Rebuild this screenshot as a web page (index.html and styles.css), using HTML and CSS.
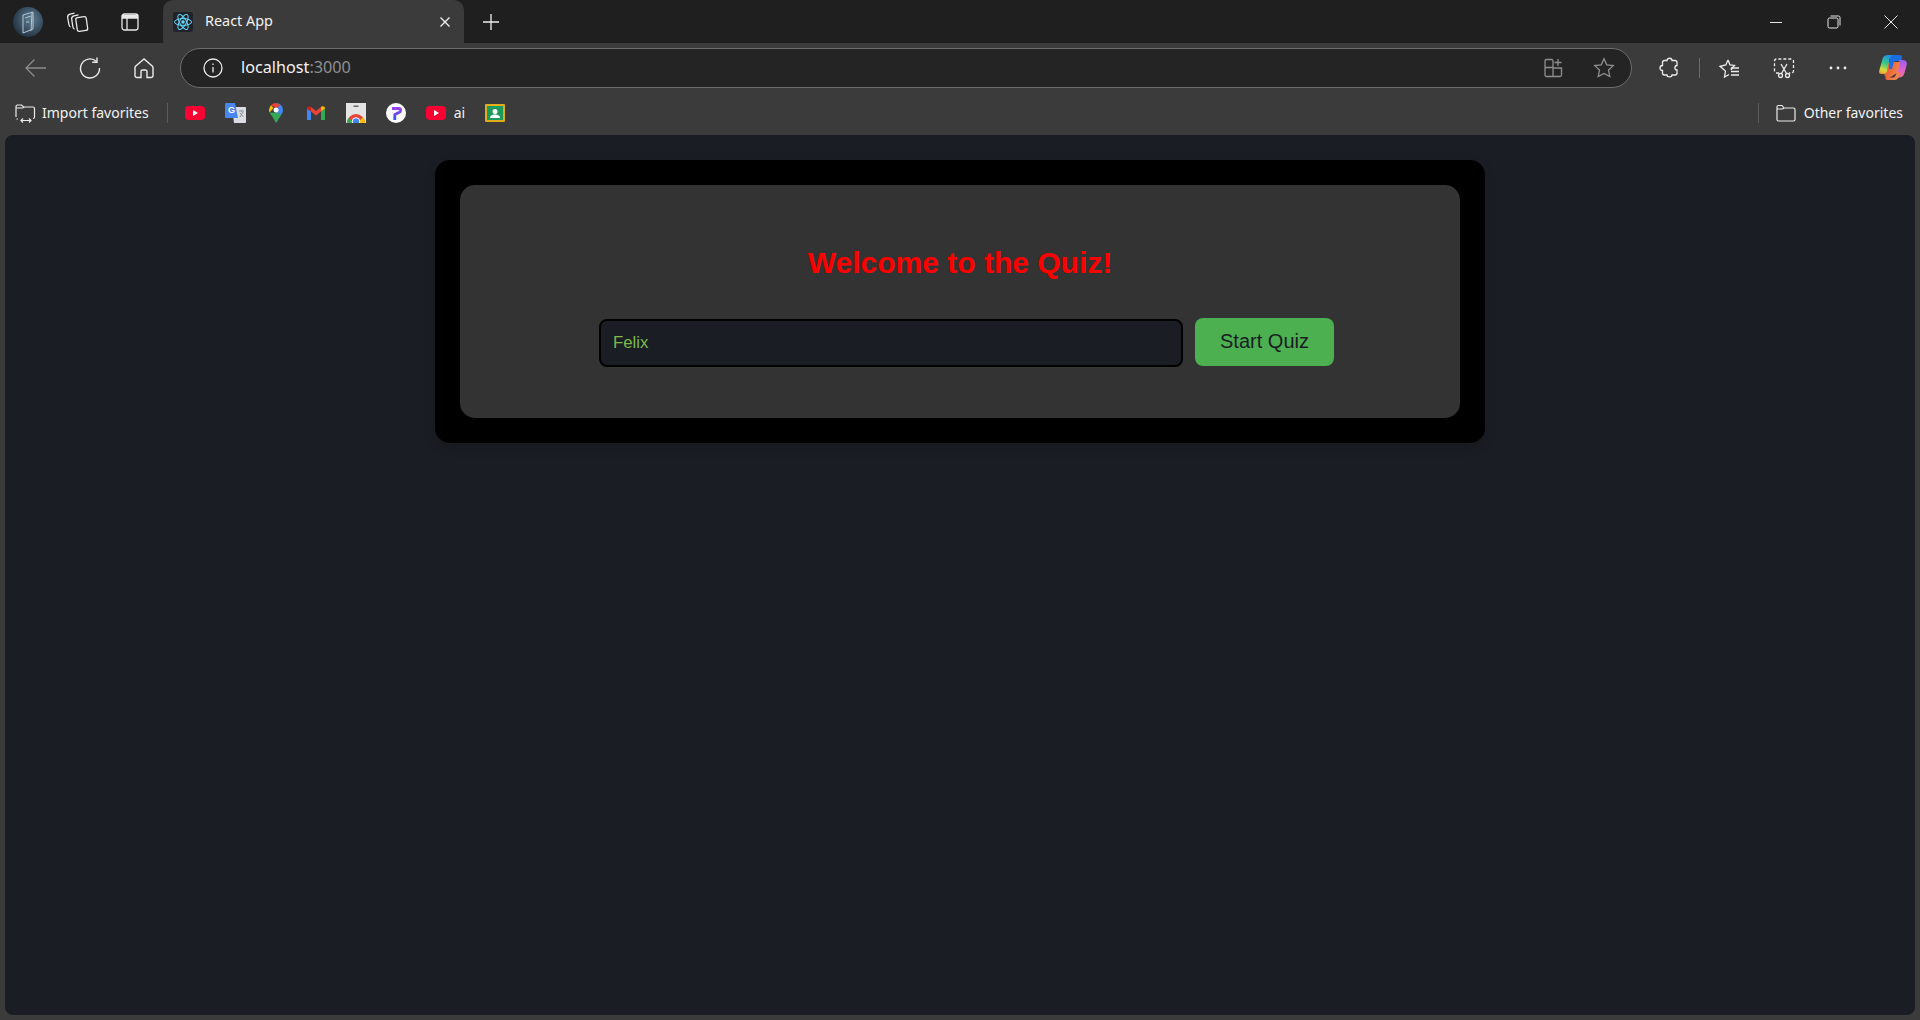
FILE: index.html
```html
<!DOCTYPE html>
<html lang="en">
<head>
    <meta charset="UTF-8">
    <meta name="viewport" content="width=device-width, initial-scale=1.0">
    <title>React App</title>
    <link rel="stylesheet" href="styles.css">
</head>
<body>
    <div class="titlebar">
        <div class="avatar">
            <svg width="30" height="30" viewBox="0 0 30 30">
                <defs>
                    <radialGradient id="avatarBg" cx="0.6" cy="0.4" r="0.7">
                        <stop offset="0" stop-color="#5f7f95"/>
                        <stop offset="1" stop-color="#1d2b3a"/>
                    </radialGradient>
                </defs>
                <circle cx="15" cy="15" r="15" fill="url(#avatarBg)"/>
                <path d="M10 8l10-3v17l-10 4zM12 11l6-2M13 15h3M19 6l-1 18" fill="none" stroke="#b9c6d0" stroke-width="1"/>
            </svg>
        </div>
        <button class="tb-btn">
            <svg width="24" height="24" viewBox="0 0 24 24" fill="none" stroke="#e8e8e8" stroke-width="1.300">
                <path d="M9.500 3.200L5 4.200C3.200 4.600 2.400 5.700 2.700 7.500L3.900 14.500C4.100 15.700 4.600 16.500 5.500 17"/>
                <path d="M13.500 4.800L9 5.800C7.200 6.200 6.400 7.300 6.700 9.100L7.800 16.500C8 17.800 8.500 18.700 9.500 19.200"/>
                <rect x="11.500" y="7" width="10.500" height="14" rx="2" transform="rotate(-8 16.750 14)"/>
            </svg>
        </button>
        <button class="tb-btn tb-btn-side">
            <svg width="20" height="20" viewBox="0 0 20 20" fill="none" stroke="#e8e8e8" stroke-width="1.300">
                <rect x="2" y="2" width="16" height="16" rx="2.500"/>
                <path d="M2.500 3.500h15v2.500h-15z" fill="#e8e8e8"/>
                <path d="M7 6v12"/>
            </svg>
        </button>
        <div class="tab">
            <svg class="tab-icon" width="20" height="20" viewBox="0 0 20 20">
                <rect width="20" height="20" rx="2" fill="#20232a"/>
                <circle cx="10" cy="10" r="1.800" fill="#61dafb"/>
                <g fill="none" stroke="#61dafb" stroke-width="1">
                    <ellipse cx="10" cy="10" rx="8.500" ry="3.400"/>
                    <ellipse cx="10" cy="10" rx="8.500" ry="3.400" transform="rotate(60 10 10)"/>
                    <ellipse cx="10" cy="10" rx="8.500" ry="3.400" transform="rotate(120 10 10)"/>
                </g>
            </svg>
            <span class="tab-title">React App</span>
            <svg class="tab-close" width="12" height="12" viewBox="0 0 12 12" stroke="#f0f0f0" stroke-width="1.300">
                <path d="M1.500 1.500l9 9M10.500 1.500l-9 9"/>
            </svg>
        </div>
        <button class="tb-btn new-tab">
            <svg width="18" height="18" viewBox="0 0 18 18" stroke="#f0f0f0" stroke-width="1.300">
                <path d="M9 1v16M1 9h16"/>
            </svg>
        </button>
        <div class="window-controls">
            <button class="win-btn">
                <svg width="14" height="14" viewBox="0 0 14 14" stroke="#e8e8e8"><path d="M1 7.500h12"/></svg>
            </button>
            <button class="win-btn">
                <svg width="14" height="14" viewBox="0 0 14 14" fill="none" stroke="#e8e8e8">
                    <rect x="1" y="3" width="10" height="10" rx="1.500"/>
                    <path d="M3.500 1h8a1.500 1.500 0 0 1 1.500 1.500v8"/>
                </svg>
            </button>
            <button class="win-btn">
                <svg width="14" height="14" viewBox="0 0 14 14" stroke="#e8e8e8"><path d="M.5.500l13 13M13.500.500l-13 13"/></svg>
            </button>
        </div>
    </div>

    <div class="toolbar">
        <button class="nav-btn">
            <svg width="22" height="22" viewBox="0 0 22 22" fill="none" stroke="#8c8c8c" stroke-width="1.300">
                <path d="M1 11h20M9.500 2.500L1 11l8.500 8.500"/>
            </svg>
        </button>
        <button class="nav-btn">
            <svg width="22" height="22" viewBox="0 0 22 22" fill="none" stroke="#ececec" stroke-width="1.400">
                <path d="M17.500 4.500A9.500 9.500 0 1 0 20.500 11"/>
                <path d="M18 .500v4.800h-4.800"/>
            </svg>
        </button>
        <button class="nav-btn">
            <svg width="22" height="22" viewBox="0 0 22 22" fill="none" stroke="#ececec" stroke-width="1.400">
                <path d="M11 2L2.800 9c-.5.500-.8 1-.8 1.800v8c0 1 .7 1.700 1.700 1.700h4.300v-6a1.500 1.500 0 0 1 1.500-1.500h3a1.500 1.500 0 0 1 1.500 1.500v6h4.300c1 0 1.700-.7 1.700-1.700v-8c0-.8-.3-1.300-.8-1.800z"/>
            </svg>
        </button>
        <div class="address-bar">
            <svg class="info-icon" width="20" height="20" viewBox="0 0 20 20" fill="none" stroke="#ececec" stroke-width="1.300">
                <circle cx="10" cy="10" r="9"/>
                <path d="M10 9v5.500M10 5.500v1.500"/>
            </svg>
            <span class="url">localhost<span class="url-port">:3000</span></span>
            <svg class="addr-action" width="20" height="20" viewBox="0 0 20 20" fill="none" stroke="#8f8f8f" stroke-width="1.300">
                <path d="M10 9.500V3a1.500 1.500 0 0 0-1.500-1.500h-5A1.500 1.500 0 0 0 2 3v6.500zM10 9.500V18.500h-6.500A1.500 1.500 0 0 1 2 17V9.500zM10 10h8.500v7a1.500 1.500 0 0 1-1.500 1.500h-7zM15 1v7M11.500 4.500h7"/>
            </svg>
            <svg class="addr-action" width="22" height="22" viewBox="0 0 22 22" fill="none" stroke="#8f8f8f" stroke-width="1.300">
                <path d="M11 1.800l2.800 6 6.500.8-4.800 4.500 1.300 6.500-5.800-3.200-5.800 3.200 1.300-6.500L1.700 8.600l6.500-.8z"/>
            </svg>
        </div>
        <div class="tools">
            <button class="tool-btn">
                <svg width="20" height="22" viewBox="0 0 20 22" fill="none" stroke="#ececec" stroke-width="1.300">
                    <path d="M8 3.500c0-3 5-3 5 0h3c1.200 0 2 .8 2 2v3c-2.800 0-2.800 4.500 0 4.500v3c0 1.200-.8 2-2 2h-3c0 2.500-5 2.500-5 0H5.500c-1.200 0-2-.8-2-2v-2.500c-3.300 0-3.300-5 0-5V5.500c0-1.200.8-2 2-2z"/>
                </svg>
            </button>
            <span class="tool-sep"></span>
            <button class="tool-btn">
                <svg width="22" height="22" viewBox="0 0 22 22" fill="none" stroke="#ececec" stroke-width="1.300">
                    <path d="M10 3l2 4.800 4.500.6-3.400 3.600 1 .8M7.500 14l-1 6 4.500-2.500M7.500 14L2 9.300l5.800-1.400L10 3"/>
                    <path d="M13 11h8M13 14.500h8M13 18h8"/>
                </svg>
            </button>
            <button class="tool-btn">
                <svg width="22" height="22" viewBox="0 0 22 22" fill="none" stroke="#ececec" stroke-width="1.300">
                    <path d="M6 16H3.500A2 2 0 0 1 1.500 14V4A2 2 0 0 1 3.500 2h15a2 2 0 0 1 2 2v10a2 2 0 0 1-2 2H16" stroke-dasharray="3 2"/>
                    <circle cx="7.500" cy="18.500" r="2"/>
                    <circle cx="14.500" cy="18.500" r="2"/>
                    <path d="M8.500 16.500L14 7M13.500 16.500L8 7"/>
                </svg>
            </button>
            <button class="tool-btn">
                <svg width="20" height="6" viewBox="0 0 20 6" fill="#ececec">
                    <circle cx="3" cy="3" r="1.400"/>
                    <circle cx="10" cy="3" r="1.400"/>
                    <circle cx="17" cy="3" r="1.400"/>
                </svg>
            </button>
            <button class="tool-btn">
                <svg width="28" height="27" viewBox="0 0 28 27">
                    <defs>
                        <linearGradient id="copA" x1="0.6" y1="0" x2="0.3" y2="1">
                            <stop offset="0" stop-color="#1f8fe8"/>
                            <stop offset="0.45" stop-color="#37c98a"/>
                            <stop offset="0.8" stop-color="#d7dc3c"/>
                            <stop offset="1" stop-color="#f2a03c"/>
                        </linearGradient>
                        <linearGradient id="copB" x1="0.5" y1="0" x2="0.5" y2="1">
                            <stop offset="0" stop-color="#9a5cf0"/>
                            <stop offset="0.6" stop-color="#e064c8"/>
                            <stop offset="1" stop-color="#f0708c"/>
                        </linearGradient>
                        <linearGradient id="copC" x1="0" y1="0" x2="1" y2="0.4">
                            <stop offset="0" stop-color="#e8502c"/>
                            <stop offset="1" stop-color="#f28a50"/>
                        </linearGradient>
                    </defs>
                    <path d="M7 8h14l1.500 8-14 9-3-3.500z" fill="url(#copC)"/>
                    <path d="M11 1h9c2.500 0 3.500 1.500 3 3l-1 3h-5c-1.500 0-2 .8-2.500 2l-1.500 6H10z" fill="#1a6fe0"/>
                    <path d="M9 1h5c-2 .5-3 2-3.500 4L8 17c-.5 2-1.500 3-3.500 3H2.500C.5 20-.3 18.500.3 16.500L3.500 5C4.200 2.500 6 1 9 1z" fill="url(#copA)"/>
                    <path d="M19 6h5c2.500 0 4.300 1.500 3.800 4.500L25.500 19c-.7 3-3 4.500-5.500 4.500h-5c2-.5 3-2 3.500-4L20.500 10c.3-2-.3-3.500-1.500-4z" fill="url(#copB)"/>
                    <path d="M8.500 26h7c2 0 3.500-1.200 4-3l1.200-5h-3l-1.200 3.500c-.5 1.500-1.500 2-3 2H8c-1 0-1.500 0-2-.5.300 1.800 1 3 2.500 3z" fill="url(#copC)"/>
                </svg>
            </button>
        </div>
    </div>

    <div class="bookmarks">
        <div class="bm-item bm-import">
            <svg width="21" height="20" viewBox="0 0 21 20" fill="none" stroke="#ececec" stroke-width="1.200">
                <path d="M1 14V3.500A1.500 1.500 0 0 1 2.500 2h4l2 2h9.500A1.500 1.500 0 0 1 19.500 5.500V14c0 1-.6 1.500-1.500 1.500M3 16H1.500M1 5h6.500l2-1"/>
                <path d="M6 17.500h10M8 15.500l-2 2 2 2M14 15.500l2 2-2 2"/>
            </svg>
            <span>Import favorites</span>
        </div>
        <span class="bm-sep"></span>
        <div class="bm-icons">
            <div class="bm-item">
                <svg width="20" height="14" viewBox="0 0 20 14"><rect width="20" height="14" rx="4" fill="#ff0033"/><path d="M8 4l5 3-5 3z" fill="#fff"/></svg>
            </div>
            <div class="bm-item">
                <svg width="21" height="20" viewBox="0 0 21 20">
                    <path d="M7 4h13a1 1 0 0 1 1 1v14a1 1 0 0 1-1 1H9z" fill="#d9dde2"/>
                    <path d="M14 8h5M16.500 7v1.500M15 14l3-5M15 10l3.500 4" stroke="#8a949e" stroke-width="1" fill="none"/>
                    <path d="M1 0h9l3 15H1a1 1 0 0 1-1-1V1a1 1 0 0 1 1-1z" fill="#4a86f0"/>
                    <text x="3" y="10" class="bm-g">G</text>
                </svg>
            </div>
            <div class="bm-item">
                <svg width="14" height="20" viewBox="0 0 14 20">
                    <path d="M7 0a7 7 0 0 1 7 7c0 2-1 3.500-2 5l-5 8z" fill="#4285f4"/>
                    <path d="M2 2.300A7 7 0 0 1 7 0l4 2-3 3.500z" fill="#ea4335"/>
                    <path d="M2 2.300A7 7 0 0 0 0 7c0 1 .2 1.800.6 2.600l4-4.600z" fill="#fbbc04"/>
                    <path d="M.6 9.600c.7 1.500 2 3 3 4.500L7 20l5-8-3.500-2.700-3 .5z" fill="#34a853"/>
                    <circle cx="7" cy="7" r="2.500" fill="#fff"/>
                </svg>
            </div>
            <div class="bm-item">
                <svg width="18" height="14" viewBox="0 0 18 14">
                    <path d="M0 2.500V14h4V5.500z" fill="#4285f4"/>
                    <path d="M14 5.500V14h4V2.500z" fill="#34a853"/>
                    <path d="M4 5.500L9 9.500l5-4V1l-5 4L4 1z" fill="#ea4335"/>
                    <path d="M0 2.500C0 .5 2.500-.5 4 1v4.500z" fill="#c5221f"/>
                    <path d="M18 2.500C18 .5 15.500-.5 14 1v4.500z" fill="#fbbc04"/>
                </svg>
            </div>
            <div class="bm-item">
                <svg width="20" height="20" viewBox="0 0 20 20">
                    <rect width="20" height="20" fill="#e4e4e4"/>
                    <rect x="7.500" y="2.500" width="5" height="1.500" fill="#666"/>
                    <path d="M1 20a9 9 0 0 1 18 0z" fill="#ea4335"/>
                    <path d="M1 20a9 9 0 0 1 1.500-5l5.500 5z" fill="#34a853"/>
                    <path d="M19 20a9 9 0 0 0-2-5.700L11 20z" fill="#fbbc04"/>
                    <circle cx="10" cy="18.500" r="3.800" fill="#4285f4" stroke="#fff" stroke-width="1"/>
                </svg>
            </div>
            <div class="bm-item">
                <svg width="20" height="20" viewBox="0 0 20 20">
                    <defs>
                        <linearGradient id="pGrad" x1="0" y1="0" x2="0" y2="1">
                            <stop offset="0" stop-color="#9b3df0"/>
                            <stop offset="1" stop-color="#2f55f0"/>
                        </linearGradient>
                    </defs>
                    <circle cx="10" cy="10" r="10" fill="#fff"/>
                    <path d="M6 5.500H13C15 5.500 15.200 8.200 13.500 9.200L8.800 11.500V17" fill="none" stroke="url(#pGrad)" stroke-width="2.800" stroke-linejoin="round"/>
                </svg>
            </div>
            <div class="bm-item bm-named">
                <svg width="20" height="14" viewBox="0 0 20 14"><rect width="20" height="14" rx="4" fill="#ff0033"/><path d="M8 4l5 3-5 3z" fill="#fff"/></svg>
                <span>ai</span>
            </div>
            <div class="bm-item">
                <svg width="20" height="18" viewBox="0 0 20 18">
                    <rect width="20" height="18" rx="1" fill="#e0ac1c"/>
                    <rect x="2" y="2" width="16" height="14" fill="#1a9a5c"/>
                    <circle cx="10" cy="7.500" r="2.500" fill="#fff"/>
                    <path d="M5 14c0-2.500 2.500-3.500 5-3.500s5 1 5 3.500z" fill="#fff"/>
                </svg>
            </div>
        </div>
        <div class="bm-other">
            <span class="bm-sep"></span>
            <div class="bm-item bm-folder">
                <svg width="20" height="18" viewBox="0 0 20 18" fill="none" stroke="#ececec" stroke-width="1.200">
                    <path d="M1 15.500V3A1.500 1.500 0 0 1 2.500 1.500h3.500l2 2.500h9.500A1.500 1.500 0 0 1 19 5.500v10a1.500 1.500 0 0 1-1.500 1.500h-15A1.500 1.500 0 0 1 1 15.500zM1 5h5.500L8 4"/>
                </svg>
                <span>Other favorites</span>
            </div>
        </div>
    </div>

    <div class="page">
        <div class="quiz-frame">
            <div class="quiz-card">
                <h1 class="quiz-title">Welcome to the Quiz!</h1>
                <div class="name-form">
                    <input class="name-input" type="text" value="Felix">
                    <button class="start-btn">Start Quiz</button>
                </div>
            </div>
        </div>
    </div>
</body>
</html>
```

FILE: styles.css
```css
* {
    box-sizing: border-box;
}
html, body {
    height: 100%;
}
body {
    margin: 0;
    background-color: #3b3b3b;
    color: #f2f2f2;
    font-family: "Noto Sans", "Liberation Sans", sans-serif;
    display: flex;
    flex-direction: column;
    overflow: hidden;
}
button {
    background: none;
    border: none;
    padding: 0;
    display: flex;
    align-items: center;
    justify-content: center;
}

/* window title bar */
.titlebar {
    height: 43px;
    flex: none;
    background-color: #1f1f1f;
    display: flex;
    align-items: center;
    padding-left: 13px;
}
.avatar {
    width: 30px;
    height: 30px;
    display: flex;
    margin-right: 19px;
}
.tb-btn {
    width: 30px;
    height: 30px;
}
.tb-btn-side {
    margin-left: 23px;
    margin-right: 18px;
}
.tab {
    width: 301px;
    height: 43px;
    background-color: #3b3b3b;
    border-radius: 10px 10px 0 0;
    display: flex;
    align-items: center;
    padding: 0 13px 0 10px;
}
.tab-icon {
    flex: none;
}
.tab-title {
    font-size: 14.400px;
    margin-left: 12px;
    padding-bottom: 2px;
    flex: 1;
}
.new-tab {
    margin-left: 12px;
}
.window-controls {
    margin-left: auto;
    display: flex;
}
.win-btn {
    width: 57.500px;
    height: 43px;
}

/* address row */
.toolbar {
    height: 46px;
    flex: none;
    display: flex;
    align-items: center;
    padding: 3px 0 0 9px;
}
.nav-btn {
    width: 54.500px;
    height: 43px;
}
.address-bar {
    width: 1452px;
    height: 40px;
    flex: none;
    margin-left: 8.500px;
    background-color: #242424;
    border: 1px solid #6d6d6d;
    border-radius: 20px;
    display: flex;
    align-items: center;
    padding: 0 16px 0 22px;
}
.url {
    font-size: 16.200px;
    margin-left: 18px;
    padding-bottom: 1px;
    flex: 1;
}
.url-port {
    color: #8f8f8f;
}
.addr-action {
    flex: none;
    margin-left: 30px;
}
.tools {
    display: flex;
    align-items: center;
    margin-left: 9.500px;
}
.tool-btn {
    width: 54.500px;
    height: 43px;
    flex: none;
}
.tool-sep {
    width: 1px;
    height: 20px;
    background-color: #6d6d6d;
    margin: 0 2px 0 3px;
}

/* favorites row */
.bookmarks {
    height: 46px;
    flex: none;
    display: flex;
    align-items: center;
    padding: 2px 17px 0 15px;
    font-size: 14px;
}
.bm-item {
    display: flex;
    align-items: center;
    height: 30px;
}
.bm-item span {
    padding-bottom: 2px;
}
.bm-import span {
    margin-left: 6px;
}
.bm-sep {
    width: 1px;
    height: 20px;
    background-color: #5c5c5c;
    margin: 0 17px 0 18px;
}
.bm-icons {
    display: flex;
    align-items: center;
    gap: 20px;
}
.bm-icons .bm-item {
    min-width: 20px;
    justify-content: center;
}
.bm-named span {
    margin-left: 8px;
}
.bm-g {
    font-family: "Liberation Sans", sans-serif;
    font-size: 9px;
    font-weight: bold;
    fill: #fff;
}
.bm-other {
    margin-left: auto;
    display: flex;
    align-items: center;
}
.bm-folder span {
    margin-left: 8px;
}

/* page content */
.page {
    flex: 1;
    margin: 0 5px 5px;
    background-color: #1a1d23;
    border-radius: 8px;
    padding-top: 25px;
}
.quiz-frame {
    width: 1050px;
    margin: 0 auto;
    padding: 25px;
    background-color: #000;
    border-radius: 15px;
    box-shadow: 0 4px 12px rgba(0, 0, 0, 0.15);
}
.quiz-card {
    height: 233px;
    padding-top: 60px;
    background-color: #333;
    border-radius: 15px;
    font-family: "Liberation Sans", Arial, sans-serif;
}
.quiz-title {
    margin: 0 0 36px;
    font-size: 30px;
    line-height: 36px;
    font-weight: bold;
    color: #ff0000;
    text-align: center;
}
.name-form {
    display: flex;
    align-items: center;
    gap: 12px;
    padding-left: 139px;
}
.name-input {
    width: 584px;
    height: 48px;
    margin-top: 2px;
    padding: 0 12px;
    background-color: #1a1d23;
    border: 2px solid #000;
    border-radius: 8px;
    color: #7cba4a;
    font-family: inherit;
    font-size: 16.800px;
}
.start-btn {
    width: 139px;
    height: 48px;
    padding-bottom: 2px;
    background-color: #4caf50;
    border-radius: 8px;
    color: #1a1d23;
    font-family: inherit;
    font-size: 20px;
}
```
